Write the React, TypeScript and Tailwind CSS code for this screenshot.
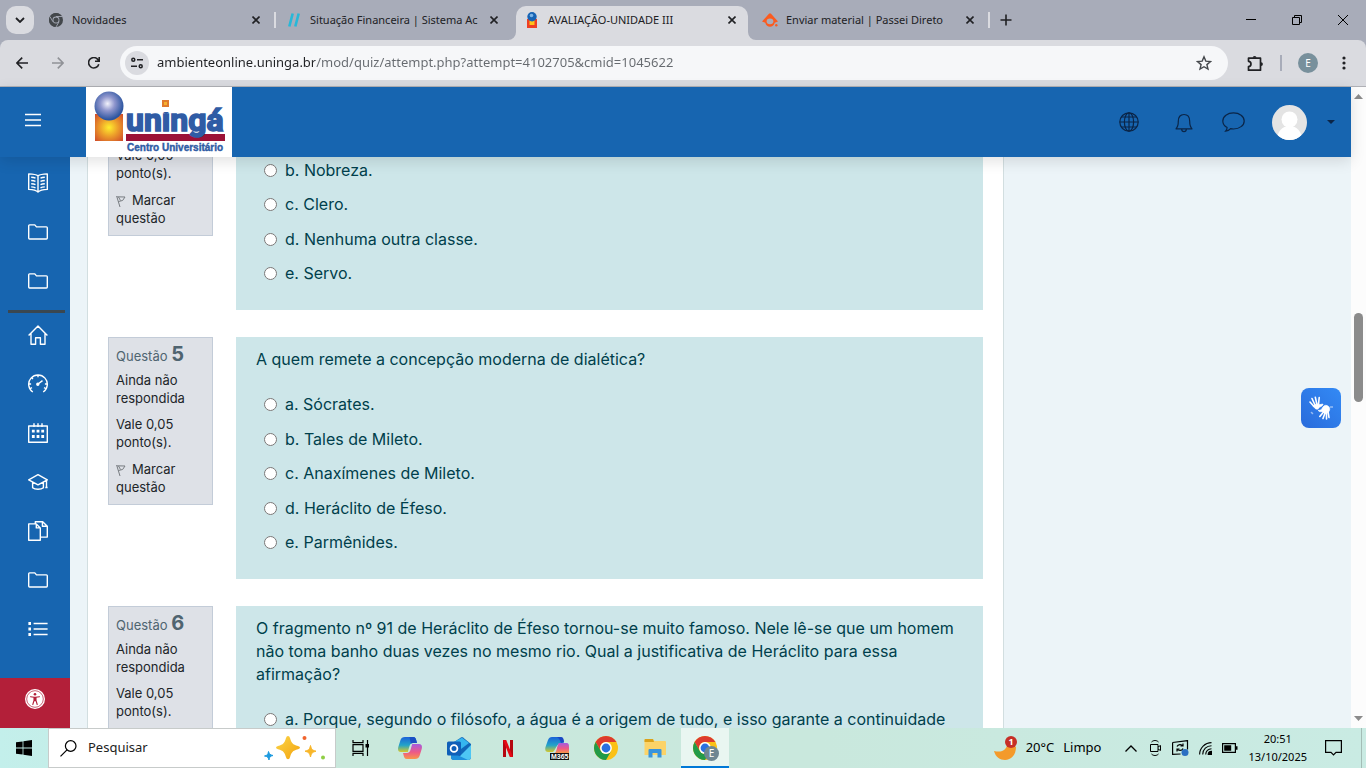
import type { ReactNode } from "react";
import clsx from "clsx";

interface IconProps {
  children: ReactNode;
  className?: string;
  size?: number;
  strokeWidth?: number;
}

// Line icon on a 20x20 grid
const Icon = ({ children, className, size = 20, strokeWidth = 1.4 }: IconProps) => (
  <svg
    width={size}
    height={size}
    viewBox="0 0 20 20"
    fill="none"
    stroke="currentColor"
    strokeWidth={strokeWidth}
    strokeLinejoin="round"
    className={clsx("shrink-0", className)}
    aria-hidden="true"
  >
    {children}
  </svg>
);

const FolderIcon = () => (
  <Icon>
    <path d="M.7 3.800q0-.9.9-.9h5.200l1.700 2h9.900q.9 0 .9.9v10.300q0 .9-.9.9H1.600q-.9 0-.9-.9z" />
  </Icon>
);

const BookIcon = () => (
  <Icon>
    <path d="M10 2.900C8 1.300 4.200 1 .7.900v15.500c3.500.1 7.300.6 9.300 2.600 2-2 5.800-2.500 9.300-2.600V.900C15.800 1 12 1.300 10 2.900zV19M3.200 4.200c1.800.1 3.200.4 4.300.9M3.200 7.500c1.800.1 3.200.4 4.300.9M3.200 10.800c1.800.1 3.200.4 4.300.9M3.200 13.900c1.800.1 3.200.4 4.300.9M16.800 4.200c-1.800.1-3.200.4-4.300.9M16.800 7.500c-1.800.1-3.200.4-4.300.9M16.800 10.800c-1.800.1-3.200.4-4.300.9M16.800 13.900c-1.800.1-3.200.4-4.300.9" />
  </Icon>
);

const HomeIcon = () => (
  <Icon>
    <path d="M.6 10.500 10 .9l9.400 9.600M3 8.300v11h4.600v-6.500h4.800v6.500H17v-11" />
  </Icon>
);

const GaugeIcon = () => (
  <Icon>
    <path d="M4.800 18A9.300 9.300 0 1 1 15.200 18M10 .8v2.400M.8 10h2.300M16.900 10h2.300M3.500 3.500l1.500 1.500M2.400 14.500l1.600-.9M17.600 14.500l-1.600-.9M10 10l4.500-3.400" />
    <circle cx="9.800" cy="10.200" r="1" fill="currentColor" />
  </Icon>
);

const CalendarIcon = () => (
  <Icon>
    <path d="M.7 3h18.600v16.300H.7zM6 .3V4M10 .3V4M14 .3V4" />
    <path
      d="M3.900 8.200h2.800M8.600 8.200h2.800M13.300 8.200h2.800M3.900 13.500h2.800M8.600 13.500h2.800M13.300 13.500h2.800"
      strokeWidth="2.800"
    />
  </Icon>
);

const GraduationIcon = () => (
  <Icon>
    <path d="M.7 7.800 10 2.700l9.300 5.100L10 12.900zM4.600 10.200v5.500c2.400 2 8.400 2 10.800 0v-5.500M18.500 8.500v7M17.300 15.500h2.300" />
  </Icon>
);

const FilesIcon = () => (
  <Icon>
    <path d="M.7 2.900h7.600l4 4v12.400H.7zM8.300 2.900v4h4M7.300 2.700V.7h7.400l4.600 4.500v10.900h-6.800M14.400.7v4.600h4.800" />
  </Icon>
);

const ListIcon = () => (
  <Icon>
    <path d="M5.600 4.500h14M5.600 10h14M5.600 15.500h14" />
    <path d="M.4 4.500h2.600M.4 10h2.600M.4 15.500h2.600" strokeWidth="2.800" />
  </Icon>
);

const topLinks = [
  { label: "Livro", icon: <BookIcon /> },
  { label: "Pasta", icon: <FolderIcon /> },
  { label: "Pasta", icon: <FolderIcon /> },
];

const mainLinks = [
  { label: "Início", icon: <HomeIcon /> },
  { label: "Painel", icon: <GaugeIcon /> },
  { label: "Calendário", icon: <CalendarIcon /> },
  { label: "Cursos", icon: <GraduationIcon /> },
  { label: "Arquivos", icon: <FilesIcon /> },
  { label: "Pasta", icon: <FolderIcon /> },
  { label: "Lista", icon: <ListIcon /> },
];

const ChromeLogo = ({ size = 24, mono = false }: { size?: number; mono?: boolean }) => (
  <svg width={size} height={size} viewBox="0 0 24 24" className="shrink-0" aria-hidden="true">
    <circle cx="12" cy="12" r="12" fill={mono ? "#43474b" : "#fbc116"} />
    <path d="M1.610 6A12 12 0 0 1 22.390 6H12a6 6 0 0 0-5.200 9z" fill={mono ? "#43474b" : "#dd3b2e"} />
    <path d="M1.610 6A12 12 0 0 0 12 24l5.200-9A6 6 0 0 1 6.800 15z" fill={mono ? "#43474b" : "#229a48"} />
    {mono && <path d="M12 6h10.400M6.800 15 1.600 6M17.200 15 12 24" stroke="#a8acb9" strokeWidth="1.500" />}
    <circle cx="12" cy="12" r="5.900" fill={mono ? "#a8acb9" : "#fff"} />
    <circle cx="12" cy="12" r="4.400" fill={mono ? "#43474b" : "#2a70e0"} />
  </svg>
);

const CloseIcon = () => (
  <svg width="8" height="8" viewBox="0 0 8 8" stroke="#202124" strokeWidth="1.600" aria-hidden="true">
    <path d="M.5.5l7 7M7.500.5l-7 7" />
  </svg>
);

interface TabProps {
  title: string;
  icon: ReactNode;
  active?: boolean;
}

const Tab = ({ title, icon, active }: TabProps) => (
  <div
    className={clsx(
      "relative flex w-[232px] items-center rounded-t-[10px] px-2",
      active ? "mt-[6px] h-[34px] bg-[#dadbe0] pb-[6px]" : "h-10"
    )}
  >
    {active && (
      <>
        <svg className="absolute bottom-0 -left-2" width="8" height="8" fill="#dadbe0">
          <path d="M8 0v8H0a8 8 0 0 0 8-8z" />
        </svg>
        <svg className="absolute bottom-0 -right-2" width="8" height="8" fill="#dadbe0">
          <path d="M0 0v8h8a8 8 0 0 1-8-8z" />
        </svg>
      </>
    )}
    <span className="flex w-4 justify-center">{icon}</span>
    <span className="ml-2 whitespace-nowrap">{title}</span>
    <button aria-label="Fechar guia" className="ml-auto flex size-4 items-center justify-center">
      <CloseIcon />
    </button>
  </div>
);

const TabDivider = ({ hidden }: { hidden?: boolean }) => (
  <span className={clsx("mx-[2px] h-4 w-[2px]", !hidden && "bg-[#dadbe0]")} />
);

const TabStrip = () => (
  <div className="flex h-10 items-center bg-[#a8acb9] text-[11px] text-[#202124]">
    <button
      aria-label="Pesquisar guias"
      className="ml-[6px] flex size-7 items-center justify-center rounded-[10px] bg-[#dadbe0]"
    >
      <svg width="10" height="6" viewBox="0 0 10 6" fill="none" stroke="#202124" strokeWidth="1.800">
        <path d="M1 1l4 4 4-4" />
      </svg>
    </button>
    <div className="ml-[6px] flex h-10 items-center">
      <Tab title="Novidades" icon={<ChromeLogo size={14} mono />} />
      <TabDivider />
      <Tab
        title="Situação Financeira | Sistema Ac"
        icon={
          <svg width="12" height="14" viewBox="0 0 12 14" stroke="#27b8d8" strokeWidth="2.600">
            <path d="M1.300 13.500 4.700.5M7.300 13.500l3.400-13" />
          </svg>
        }
      />
      <TabDivider hidden />
      <Tab
        active
        title="AVALIAÇÃO-UNIDADE III"
        icon={
          <svg width="10" height="16" viewBox="0 0 10 16">
            <path d="M0 7h10v9H0z" fill="#ee3f24" />
            <path d="M2.500 8h5v5h-5z" fill="#ffc21a" />
            <circle cx="5" cy="4.800" r="4.700" fill="#1763b4" />
            <circle cx="4.500" cy="3.500" r="1.800" fill="#79b3e6" />
          </svg>
        }
      />
      <TabDivider hidden />
      <Tab
        title="Enviar material | Passei Direto"
        icon={
          <svg width="16" height="14" viewBox="0 0 16 14">
            <path
              fillRule="evenodd"
              d="M0 8.500 7 .800q1-1 2 0l7 7.700-3.300 1.200c-1 5.300-8.400 5.300-9.400 0zM4.600 8.300a3.400 2.900 0 0 0 6.800 0 3.400 2.900 0 0 0-6.800 0z"
              fill="#fb5b1f"
            />
            <circle cx="14.300" cy="12.300" r="1.200" fill="#fb5b1f" />
          </svg>
        }
      />
      <TabDivider />
    </div>
    <button aria-label="Nova guia" className="ml-2">
      <svg width="12" height="12" viewBox="0 0 12 12" stroke="#202124" strokeWidth="1.600">
        <path d="M6 .5v11M.5 6h11" />
      </svg>
    </button>
    <div className="ml-auto flex text-black">
      <button aria-label="Minimizar" className="flex h-10 w-[46px] items-center justify-center">
        <svg width="10" height="10" stroke="currentColor">
          <path d="M0 4.500h10" />
        </svg>
      </button>
      <button aria-label="Restaurar" className="flex h-10 w-[46px] items-center justify-center">
        <svg width="10" height="10" fill="none" stroke="currentColor">
          <path d="M.5 2.500h7v7h-7zM2.500 2.500v-2h7v7h-2" />
        </svg>
      </button>
      <button aria-label="Fechar" className="flex h-10 w-[46px] items-center justify-center">
        <svg width="10" height="10" stroke="currentColor">
          <path d="M0 0l10 10M10 0 0 10" />
        </svg>
      </button>
    </div>
  </div>
);

const AddressBar = () => (
  <div className="bg-[#a8acb9]">
    <div className="flex h-[47px] items-center rounded-t-[8px] border-b border-[#b0b1b6] bg-[#dadbe0] text-[#202124]">
      <button aria-label="Voltar" className="ml-4">
        <svg width="12" height="12" viewBox="0 0 12 12" fill="none" stroke="currentColor" strokeWidth="1.600">
          <path d="M6.200.6.9 6l5.300 5.400M1 6h11" />
        </svg>
      </button>
      <button aria-label="Avançar" className="ml-6 text-[#909297]">
        <svg width="12" height="12" viewBox="0 0 12 12" fill="none" stroke="currentColor" strokeWidth="1.600">
          <path d="M5.800.6 11.100 6l-5.300 5.400M11 6H0" />
        </svg>
      </button>
      <button aria-label="Recarregar" className="ml-6">
        <svg width="12" height="12" viewBox="0 0 12 12" fill="none" stroke="currentColor" strokeWidth="1.600">
          <path d="M10.800 7.200A5.200 5.200 0 1 1 10 2.700l1.200 1.400M11.200 0v4.300H7" />
        </svg>
      </button>
      <div className="ml-5 mr-[19px] flex h-[34px] flex-1 items-center rounded-full bg-[#f6f7f9] pl-[5px] pr-4">
        <button
          aria-label="Informações do site"
          className="flex size-6 items-center justify-center rounded-full bg-[#dadbe0]"
        >
          <svg width="12" height="12" viewBox="0 0 12 12" fill="none" stroke="currentColor" strokeWidth="1.500">
            <circle cx="2.300" cy="2.800" r="1.500" />
            <circle cx="9.700" cy="9.200" r="1.500" />
            <path d="M6 2.800h6M0 9.200h6" />
          </svg>
        </button>
        <input
          type="text"
          aria-label="Endereço"
          defaultValue="ambienteonline.uninga.br/mod/quiz/attempt.php?attempt=4102705&cmid=1045622"
          className="ml-2 flex-1 bg-[linear-gradient(90deg,#202124_158px,#666a6f_158px)] bg-clip-text text-[13px] text-transparent outline-none"
        />
        <button aria-label="Adicionar aos favoritos">
          <svg width="16" height="16" viewBox="0 0 16 16" fill="none" stroke="#45484c" strokeWidth="1.400">
            <path d="M8 1.800l1.800 4.300 4.700.4-3.600 3.100 1.100 4.500L8 11.700l-4 2.400 1.100-4.500-3.600-3.100 4.700-.4z" />
          </svg>
        </button>
      </div>
      <button aria-label="Extensões">
        <svg width="17" height="17" viewBox="0 0 17 17" fill="none" stroke="currentColor" strokeWidth="1.700">
          <path d="M1.500 3.200h12v12h-12v-3.500c3.300-.3 3.300-5.100 0-5.400z" strokeLinejoin="round" />
          <path d="M5.700 2.800a1.900 1.900 0 0 1 3.800 0zM14 7.200a1.900 1.900 0 0 1 0 3.800z" fill="currentColor" stroke="none" />
        </svg>
      </button>
      <span className="ml-4 h-4 w-[2px] bg-[#a8acb9]" />
      <button
        aria-label="Perfil"
        className="ml-4 flex size-5 items-center justify-center rounded-full bg-[#78909c] text-[10px] text-white"
      >
        E
      </button>
      <button aria-label="Menu" className="ml-6 mr-5">
        <svg width="4" height="14" viewBox="0 0 4 14" fill="currentColor">
          <circle cx="2" cy="2" r="1.600" />
          <circle cx="2" cy="7" r="1.600" />
          <circle cx="2" cy="12" r="1.600" />
        </svg>
      </button>
    </div>
  </div>
);

const Logo = () => (
  <svg width="146" height="70" viewBox="0 0 146 70" role="img" aria-label="Uningá Centro Universitário">
    <defs>
      <radialGradient id="ball" cx=".45" cy=".42" r=".55">
        <stop offset="0" stopColor="#f2f2fb" />
        <stop offset=".45" stopColor="#8f96cd" />
        <stop offset="1" stopColor="#2c55a0" />
      </radialGradient>
      <radialGradient id="sun" r=".7">
        <stop offset="0" stopColor="#ffee2e" />
        <stop offset=".45" stopColor="#eda02a" />
        <stop offset="1" stopColor="#cf4a2a" />
      </radialGradient>
    </defs>
    <rect width="146" height="70" fill="#fff" />
    <rect x="9" y="27" width="28" height="27" fill="url(#sun)" />
    <circle cx="23" cy="19" r="14.500" fill="url(#ball)" />
    <rect x="40" y="47" width="99" height="7" fill="#9c1237" />
    <text
      x="40"
      y="44"
      fontSize="32"
      fontWeight="700"
      fill="#2f5ca5"
      stroke="#2f5ca5"
      strokeWidth="1.600"
      className="font-['Roboto',sans-serif]"
    >
      uningá
    </text>
    <rect x="74" y="11" width="13" height="14" fill="#fff" />
    <rect x="76" y="13" width="7" height="7" fill="#e07a2c" />
    <rect x="78" y="15" width="3" height="3" fill="#f5b02e" />
    <text
      x="41"
      y="64"
      fontSize="10"
      fontWeight="700"
      fill="#2f5ca5"
      stroke="#2f5ca5"
      strokeWidth=".4"
      className="font-['Liberation_Sans',sans-serif]"
    >
      Centro Universitário
    </text>
  </svg>
);

const SiteHeader = () => (
  <header className="relative z-10 flex h-[70px] shrink-0 items-center bg-[#1765b0] text-[#0b2547] shadow-[0_4px_14px_rgba(0,0,0,0.12)]">
    <button aria-label="Abrir menu" className="ml-[25px] mr-[45px] pb-1 text-white">
      <svg width="16" height="14" viewBox="0 0 16 14" stroke="currentColor" strokeWidth="1.400">
        <path d="M0 1.500h16M0 7h16M0 12.500h16" />
      </svg>
    </button>
    <a href="#inicio">
      <Logo />
    </a>
    <div className="ml-auto flex items-center">
      <button aria-label="Idioma">
        <Icon strokeWidth={1.200}>
          <circle cx="10" cy="10" r="9.200" />
          <ellipse cx="10" cy="10" rx="4.600" ry="9.200" />
          <path d="M10 .8v18.400M.8 10h18.400M2.500 5h15M2.500 15h15" />
        </Icon>
      </button>
      <button aria-label="Notificações" className="ml-[35px] pt-px">
        <Icon strokeWidth={1.200}>
          <path d="M2 15.800c2-2 2.300-3 2.300-7.500 0-4.500 2.500-6.800 5.700-6.800s5.700 2.300 5.700 6.800c0 4.500.3 5.500 2.300 7.500zM7.600 16c.2 3.600 4.600 3.600 4.800 0" />
        </Icon>
      </button>
      <button aria-label="Mensagens" className="ml-7">
        <svg width="23" height="20" viewBox="0 0 23 20" fill="none" stroke="currentColor" strokeWidth="1.200">
          <path d="M11.500.8c6 0 10.700 3.600 10.700 8.100s-4.700 8.100-10.700 8.100c-1 0-2-.1-2.900-.3-1.100 1.300-2.800 2.300-5 2.400 1-1 1.500-2.300 1.500-3.600C2.400 14 .8 11.600.8 8.900.8 4.400 5.500.8 11.500.8z" />
        </svg>
      </button>
      <button aria-label="Menu do usuário" className="ml-[27px] mr-4 flex items-center">
        <svg width="35" height="35" viewBox="0 0 35 35">
          <defs>
            <clipPath id="avatar">
              <circle cx="17.500" cy="17.500" r="17.500" />
            </clipPath>
          </defs>
          <g clipPath="url(#avatar)">
            <rect width="35" height="35" fill="#e4e4e4" />
            <circle cx="17.500" cy="14.500" r="8" fill="#fff" />
            <path d="M5 35c0-8 5-14 12.500-14S30 27 30 35z" fill="#fff" />
          </g>
        </svg>
        <svg width="8" height="4" viewBox="0 0 8 4" fill="currentColor" className="ml-5">
          <path d="M0 0h8L4 4z" />
        </svg>
      </button>
    </div>
  </header>
);

const SideLink = ({ label, icon }: { label: string; icon: ReactNode }) => (
  <a href="#nav" aria-label={label} className="flex h-10 items-center pl-7">
    {icon}
  </a>
);

const Sidebar = () => (
  <nav className="flex w-[70px] shrink-0 flex-col bg-[#1765b0] pt-[6px] text-white">
    <div className="flex flex-col gap-[9px]">
      {topLinks.map((link, i) => (
        <SideLink key={i} {...link} />
      ))}
    </div>
    <hr className="mt-[9px] mr-[5px] mb-[2px] ml-2 h-[3px] border-0 bg-[#3a4750]" />
    <div className="flex flex-col gap-[9px]">
      {mainLinks.map((link) => (
        <SideLink key={link.label} {...link} />
      ))}
    </div>
    <button
      aria-label="Acessibilidade"
      className="mt-auto flex h-[50px] items-center bg-[#b31f39] pb-2 pl-[25px]"
    >
      <svg width="20" height="20" viewBox="0 0 20 20">
        <circle cx="10" cy="10" r="10" fill="#fff" />
        <circle cx="10" cy="10" r="8.300" fill="none" stroke="#b31f39" strokeWidth=".7" />
        <circle cx="10" cy="5.200" r="1.300" fill="#b31f39" />
        <path
          d="M5.500 7.700 9 8.300v3.200l-1.200 4M14.500 7.700l-3.500.6v3.200l1.200 4M9 8.300h2M9.500 8.300h1v3.500h-1z"
          fill="none"
          stroke="#b31f39"
          strokeWidth="1.100"
          strokeLinecap="round"
        />
      </svg>
    </button>
  </nav>
);

interface Question {
  number?: number;
  lines?: string[];
  answers: string[];
}

const questions: Question[] = [
  { answers: ["b. Nobreza.", "c. Clero.", "d. Nenhuma outra classe.", "e. Servo."] },
  {
    number: 5,
    lines: ["A quem remete a concepção moderna de dialética?"],
    answers: [
      "a. Sócrates.",
      "b. Tales de Mileto.",
      "c. Anaxímenes de Mileto.",
      "d. Heráclito de Éfeso.",
      "e. Parmênides.",
    ],
  },
  {
    number: 6,
    lines: [
      "O fragmento nº 91 de Heráclito de Éfeso tornou-se muito famoso. Nele lê-se que um homem",
      "não toma banho duas vezes no mesmo rio. Qual a justificativa de Heráclito para essa",
      "afirmação?",
    ],
    answers: ["a. Porque, segundo o filósofo, a água é a origem de tudo, e isso garante a continuidade"],
  },
];

const QuestionInfo = ({ number }: { number?: number }) => (
  <div
    className={clsx(
      "w-[105px] shrink-0 self-start border border-[#c3ccd8] bg-[#dee1e7] px-[7px] pb-2 text-[13px] leading-[18px] text-[#212529]",
      number ? "pt-1" : "-mt-3"
    )}
  >
    {number && (
      <>
        <h3 className="h-6 leading-6 text-[#4f6470]">
          Questão <span className="text-xl leading-6 font-bold">{number}</span>
        </h3>
        <p className="mt-[5px]">
          Ainda não
          <br />
          respondida
        </p>
      </>
    )}
    <p className={number ? "mt-2" : ""}>
      Vale 0,05
      <br />
      ponto(s).
    </p>
    <button className="mt-[9px] block text-left">
      <svg width="10" height="11" viewBox="0 0 10 11" fill="none" stroke="#777b80" className="mr-[6px] inline">
        <path d="M.6 0 4 11M1.200.8l7.800.2-2.400 3.500-4.200 1M2.500 1l2 3.500" />
      </svg>
      Marcar
      <br />
      questão
    </button>
  </div>
);

const QuestionBlock = ({ question, index }: { question: Question; index: number }) => (
  <section className="flex gap-[23px]">
    <QuestionInfo number={question.number} />
    <div className="flex-1 bg-[#cde6e9] px-5 pb-[25px] text-base leading-[23px] text-[#003f4c]">
      {question.lines && (
        <p className="pt-[11px] pb-[22px] whitespace-nowrap">
          {question.lines.map((line) => (
            <span key={line} className="block">
              {line}
            </span>
          ))}
        </p>
      )}
      <div
        className={clsx(
          "flex flex-col justify-between pl-2",
          question.answers.length === 5 && "min-h-[161px]",
          question.answers.length === 4 && "mt-[2px] min-h-[126px]"
        )}
      >
        {question.answers.map((answer) => (
          <label key={answer} className="flex items-center gap-2 whitespace-nowrap">
            <input type="radio" name={`q${index}`} className="size-[13px] shrink-0" />
            {answer}
          </label>
        ))}
      </div>
    </div>
  </section>
);

const Scrollbar = () => (
  <div className="flex w-[15px] shrink-0 flex-col items-center bg-[#fcfcfc] pt-[7px] pb-[7px]">
    <svg width="9" height="5" fill="#8b8b8b">
      <path d="M0 5h9L4.500 0z" />
    </svg>
    <span className="mt-[214px] h-[89px] w-[9px] rounded-full bg-[#8b8b8b]" />
    <svg width="9" height="5" fill="#8b8b8b" className="mt-auto">
      <path d="M0 0h9L4.500 5z" />
    </svg>
  </div>
);

const CopilotLogo = () => (
  <svg width="24" height="22" viewBox="0 0 24 22" aria-hidden="true">
    <defs>
      <linearGradient id="cpA" x2="0" y2="1">
        <stop offset="0" stopColor="#1c62d8" />
        <stop offset=".55" stopColor="#22a4c9" />
        <stop offset="1" stopColor="#d8c92b" />
      </linearGradient>
      <linearGradient id="cpB" x2="0" y2="1">
        <stop offset="0" stopColor="#a45be0" />
        <stop offset=".55" stopColor="#ee5a86" />
        <stop offset="1" stopColor="#f8964a" />
      </linearGradient>
    </defs>
    <path d="M7 0h8c2.500 0 3 2 3.600 4.500L19 6h-4c-2 0-3 1.500-3.600 3.500L9.800 15H3C0 15-.3 12.500.3 10L2.500 3C3.200 1 4.500 0 7 0z" fill="url(#cpA)" />
    <path d="M11.500 0H15c2.500 0 3 2 3.600 4.500L19 6h-4c-1 0-1.700.3-2.200.8z" fill="#1a4fc4" />
    <path d="M17 22H9c-2.500 0-3-2-3.600-4.500L5 16h4c2 0 3-1.500 3.600-3.500L14.200 7H21c3 0 3.300 2.500 2.700 5L21.500 19c-.7 2-2 3-4.500 3z" fill="url(#cpB)" />
  </svg>
);

const OutlookLogo = () => (
  <svg width="24" height="23" viewBox="0 0 24 23" aria-hidden="true">
    <path d="M4 7 14 .4q1-.6 2 0L24 7v13q0 3-3 3H7q-3 0-3-3z" fill="#1066b8" />
    <path d="M7 5 15 .8 22 6l-8 6z" fill="#35b5ef" />
    <path d="M24 8v12q0 3-3 3H9z" fill="#4dc6f4" />
    <path d="M4 15l17 8H7q-3 0-3-3z" fill="#1e8fdc" />
    <rect y="4.500" width="14" height="14" rx="1.500" fill="#0f5fb8" />
    <circle cx="7" cy="11.500" r="3.400" fill="none" stroke="#fff" strokeWidth="1.800" />
  </svg>
);

const M365Logo = () => (
  <svg width="24" height="24" viewBox="0 0 24 24" aria-hidden="true">
    <path d="M7 1h9l3 6h-4c-3 1-4 6-7 9H3c-3 0-3-3-2.500-5L3 4c.8-2 2-3 4-3z" fill="url(#cpA)" />
    <path d="M12 1h4c2 0 3 2 3 5l-3 1c-1-3-2-5-4-6z" fill="#1a48c4" />
    <path d="M14 7h7c3 0 3 2 3 4v6H10c2-2 2-8 4-10z" fill="url(#cpB)" />
    <rect x="5" y="17" width="19" height="7" fill="#111" />
    <text x="6" y="23" fontSize="7" fontWeight="700" fill="#fff" className="font-['Liberation_Sans',sans-serif]">
      M365
    </text>
  </svg>
);

const apps = [
  {
    label: "Visão de tarefas",
    icon: (
      <svg width="17" height="16" viewBox="0 0 17 16" fill="none" stroke="#000" strokeWidth="1.200">
        <path d="M1 4.600h10v6.800H1zM1 0v2.600h10V0M1 16v-2.600h10V16M15.500 0v16" />
        <path d="M13.500 4h3.500v3.500h-3.500z" fill="#000" stroke="none" />
      </svg>
    ),
  },
  { label: "Copilot", icon: <CopilotLogo /> },
  { label: "Outlook", icon: <OutlookLogo /> },
  {
    label: "Netflix",
    icon: (
      <svg width="10" height="17" viewBox="0 0 10 17">
        <path d="M0 0h3v17H0zM7 0h3v17H7z" fill="#b4060f" />
        <path d="M0 0h3.200L10 17H6.800z" fill="#e50914" />
      </svg>
    ),
  },
  { label: "Microsoft 365", icon: <M365Logo /> },
  { label: "Chrome", icon: <ChromeLogo /> },
  {
    label: "Explorador de Arquivos",
    icon: (
      <svg width="22" height="19" viewBox="0 0 22 19">
        <path d="M.5 1q0-1 1-1H9l1.500 2H21q1 0 1 1v13H.5z" fill="#fbd368" />
        <path d="M.5 1q0-1 1-1H9l1 3H.5z" fill="#dba21a" />
        <path d="M4.500 18.500V11q0-1 1-1h11q1 0 1 1v7.500h-4V14h-5v4.500z" fill="#3994dc" />
      </svg>
    ),
  },
];

const Taskbar = () => (
  <footer className="flex h-10 shrink-0 items-center bg-[linear-gradient(90deg,#c3efeb,#c9e8dc_25%,#c9e8dd_60%,#c9ebe3)] text-black">
    <button aria-label="Iniciar" className="flex w-12 justify-center">
      <svg width="16" height="16" viewBox="0 0 16 16">
        <path d="M0 2.300 6.600 1.400v6.200H0zM7.400 1.300 16 0v7.600H7.400zM0 8.400h6.600v6.200L0 13.700zM7.400 8.400H16V16l-8.600-1.300z" />
      </svg>
    </button>
    <div className="flex h-10 w-[288px] items-center border border-[#c7cbca] bg-white pl-[11px] pr-[10px]">
      <svg width="17" height="17" viewBox="0 0 17 17" fill="none" stroke="#000" strokeWidth="1.200">
        <circle cx="10.700" cy="6" r="5.300" />
        <path d="M7 9.800.5 16.300" />
      </svg>
      <input
        type="text"
        aria-label="Pesquisar"
        placeholder="Pesquisar"
        className="ml-[11px] w-32 flex-1 text-[13px] outline-none placeholder:text-[#222]"
      />
      <svg width="61" height="25" viewBox="0 0 61 25" aria-hidden="true">
        <defs>
          <linearGradient id="star" x2="1" y2="1">
            <stop offset="0" stopColor="#fbd64a" />
            <stop offset="1" stopColor="#f3a20d" />
          </linearGradient>
        </defs>
        <path d="M24 0q1.500 0 2 2c1.500 5 2.500 6.500 8 8q2 .5 2 1.500t-2 1.700c-5.500 1.500-6.500 3-8 8q-.5 2-2 2t-2-2c-1.500-5-2.500-6.500-8-8q-2-.7-2-1.700t2-1.500c5.500-1.500 6.500-3 8-8q.5-2 2-2z" fill="url(#star)" />
        <path d="M46.500 9.500c1 4 1.500 4.500 5.500 5.700-4 1.200-4.500 1.800-5.500 5.800-1-4-1.500-4.600-5.500-5.800 4-1.200 4.500-1.700 5.500-5.700z" fill="#f8b629" stroke="#f8b629" />
        <path d="M4.500 15.500c1 3 1.500 3.200 4.500 4-3 .8-3.500 1.200-4 4.500-1-3-1.500-3.500-4.500-4 3-.8 3.500-1.500 4-4.500z" fill="#1d9be0" stroke="#1d9be0" />
        <circle cx="40.500" cy="2" r="2" fill="#f0642e" />
        <circle cx="59" cy="21.500" r="2" fill="#8fce45" />
      </svg>
    </div>
    {apps.map((app) => (
      <button key={app.label} aria-label={app.label} className="flex h-10 w-[49px] items-center justify-center">
        {app.icon}
      </button>
    ))}
    <button
      aria-label="Chrome em uso"
      className="relative ml-[2px] flex h-10 w-12 items-center justify-center border-b-2 border-[#0078d7] bg-[#e9f6f1] pt-[2px]"
    >
      <ChromeLogo />
      <span className="absolute right-[10px] bottom-[5px] flex size-[15px] items-center justify-center rounded-full bg-[#6f8792] text-[10px] text-white">
        E
      </span>
    </button>
    <button className="ml-auto flex items-center text-[13px]">
      <svg width="24" height="24" viewBox="0 0 24 24" className="mr-2">
        <path d="M0 15c8 2 13-1 14-9l8 5c0 8-5 13-11 13C6 24 1.500 21 0 15z" fill="#f49a2a" />
        <circle cx="17" cy="6" r="6" fill="#c62f27" />
        <text x="14.500" y="9.200" fontSize="9" fill="#fff" fontWeight="700">
          1
        </text>
      </svg>
      20°C
      <span className="ml-[9px]">Limpo</span>
    </button>
    <div className="ml-6 flex items-center">
      <svg width="12" height="7" viewBox="0 0 12 7" fill="none" stroke="#000" strokeWidth="1.300">
        <path d="M.5 6.500 6 1l5.500 5.500" />
      </svg>
      <svg width="11" height="16" viewBox="0 0 11 16" fill="none" stroke="#000" className="ml-[13px]">
        <path d="M.5 4.500h7.500v7H.5zM8 7l2.500-1.500v5L8 9M1.500 2c2-2 5-2 7 0M1.500 14c2 2 5 2 7 0" />
      </svg>
      <svg width="17" height="16" viewBox="0 0 17 16" fill="none" stroke="#000" strokeWidth="1.200" className="ml-[11px]">
        <path d="M.6 2.500 15.500.6v9M.6 2.500v11.900l8-.4M5 6.500c1-2.500 4.500-2.500 6-.5M11 3.500V6H8.500M11 8.500c-1 2.500-4.500 2.500-6 .5M5 11.500V9h2.500" />
        <circle cx="13" cy="12.500" r="3.500" fill="#2b6fc2" stroke="none" />
      </svg>
      <svg width="13" height="13" viewBox="0 0 13 13" fill="none" stroke="#000" strokeWidth="1.100" className="ml-[10px]">
        <path d="M.6 12.500C.6 6 6 .6 12.500.6M3.700 12.500c0-5 4-8.800 8.800-8.800M6.700 12.500c0-3.300 2.500-5.800 5.800-5.800" />
        <path d="M9.200 12.500a3.300 3.300 0 0 1 3.300-3.300v3.300z" fill="#000" />
      </svg>
      <svg width="16" height="10" viewBox="0 0 16 10" className="ml-[10px]">
        <path d="M.6.6h12.800v8.800H.6z" fill="none" stroke="#000" strokeWidth="1.200" />
        <path d="M2.200 2.200h7v5.600h-7zM14 3.200h1.500v3.600H14z" />
      </svg>
    </div>
    <time className="ml-[10px] text-center text-[11px] leading-[18px]">
      <span className="block">20:51</span>
      <span className="block">13/10/2025</span>
    </time>
    <button aria-label="Notificações do sistema" className="ml-[18px] mr-[19px]">
      <svg width="17" height="16" viewBox="0 0 17 16" fill="none" stroke="#000" strokeWidth="1.200">
        <path d="M.6.6h15.800v11.800h-5.400L8.500 15 6 12.400H.6z" />
      </svg>
    </button>
    <span className="mr-1 h-10 w-px bg-[#a3bdb6]" />
  </footer>
);

const App = () => (
  <div className="flex h-screen flex-col overflow-hidden font-['Noto_Sans',sans-serif]">
    <TabStrip />
    <AddressBar />
    <div className="flex min-h-0 flex-1">
      <div className="relative flex min-w-0 flex-1 flex-col font-['Inter',sans-serif]">
        <SiteHeader />
        <div className="flex min-h-0 flex-1 bg-[#ecf4f8]">
          <Sidebar />
          <main className="ml-[17px] mr-[347px] flex flex-1 flex-col gap-[27px] overflow-hidden border-x border-[#d2dee0] bg-white px-5">
            {questions.map((question, i) => (
              <QuestionBlock key={i} question={question} index={i} />
            ))}
          </main>
        </div>
        <button
          aria-label="Acessível em Libras"
          className="absolute right-[10px] top-[301px] flex size-10 items-center justify-center rounded-lg bg-linear-to-tr from-[#2a6bdb] to-[#338af5]"
        >
          <svg width="24" height="24" viewBox="0 0 24 24" fill="none" stroke="#fff" strokeLinecap="round" strokeWidth="1.600">
            <path d="M5 10.500 1 6M6 9 3 2.500M7.800 8 6.300 1.200M9.500 8.500l.7-7" />
            <path d="M4.500 10c1-1.500 3.500-2.500 5.500-1.500 1.200.5 3-.8 4-.3.500.6-1.500 2.300-3 2.800-1.500.5-1 2-2.500 2.200-1.700.3-3.500-1.200-4-3.200z" fill="#fff" strokeWidth=".6" />
            <path d="M14.500 16l-3.700 4.500M16 17l-2 5.500M17.500 16.500V23M19 15l1 6.500" />
            <path d="M9.500 14.500c1.500-.2 2.500-.7 3.300-1.500 1-2.500 3-4.300 5.200-3.500 2.200.8 3.300 3 2.500 5-.7 2-2.700 3-4.500 2.800-1.500-.1-1.700-1.700-3-1.600-1.500.1-3.800.1-3.500-1.200z" fill="#fff" strokeWidth=".6" />
            <path d="M21.500 11h2M2.500 16.500l1 1" opacity=".5" />
          </svg>
        </button>
      </div>
      <Scrollbar />
    </div>
    <Taskbar />
  </div>
);

export default App;
